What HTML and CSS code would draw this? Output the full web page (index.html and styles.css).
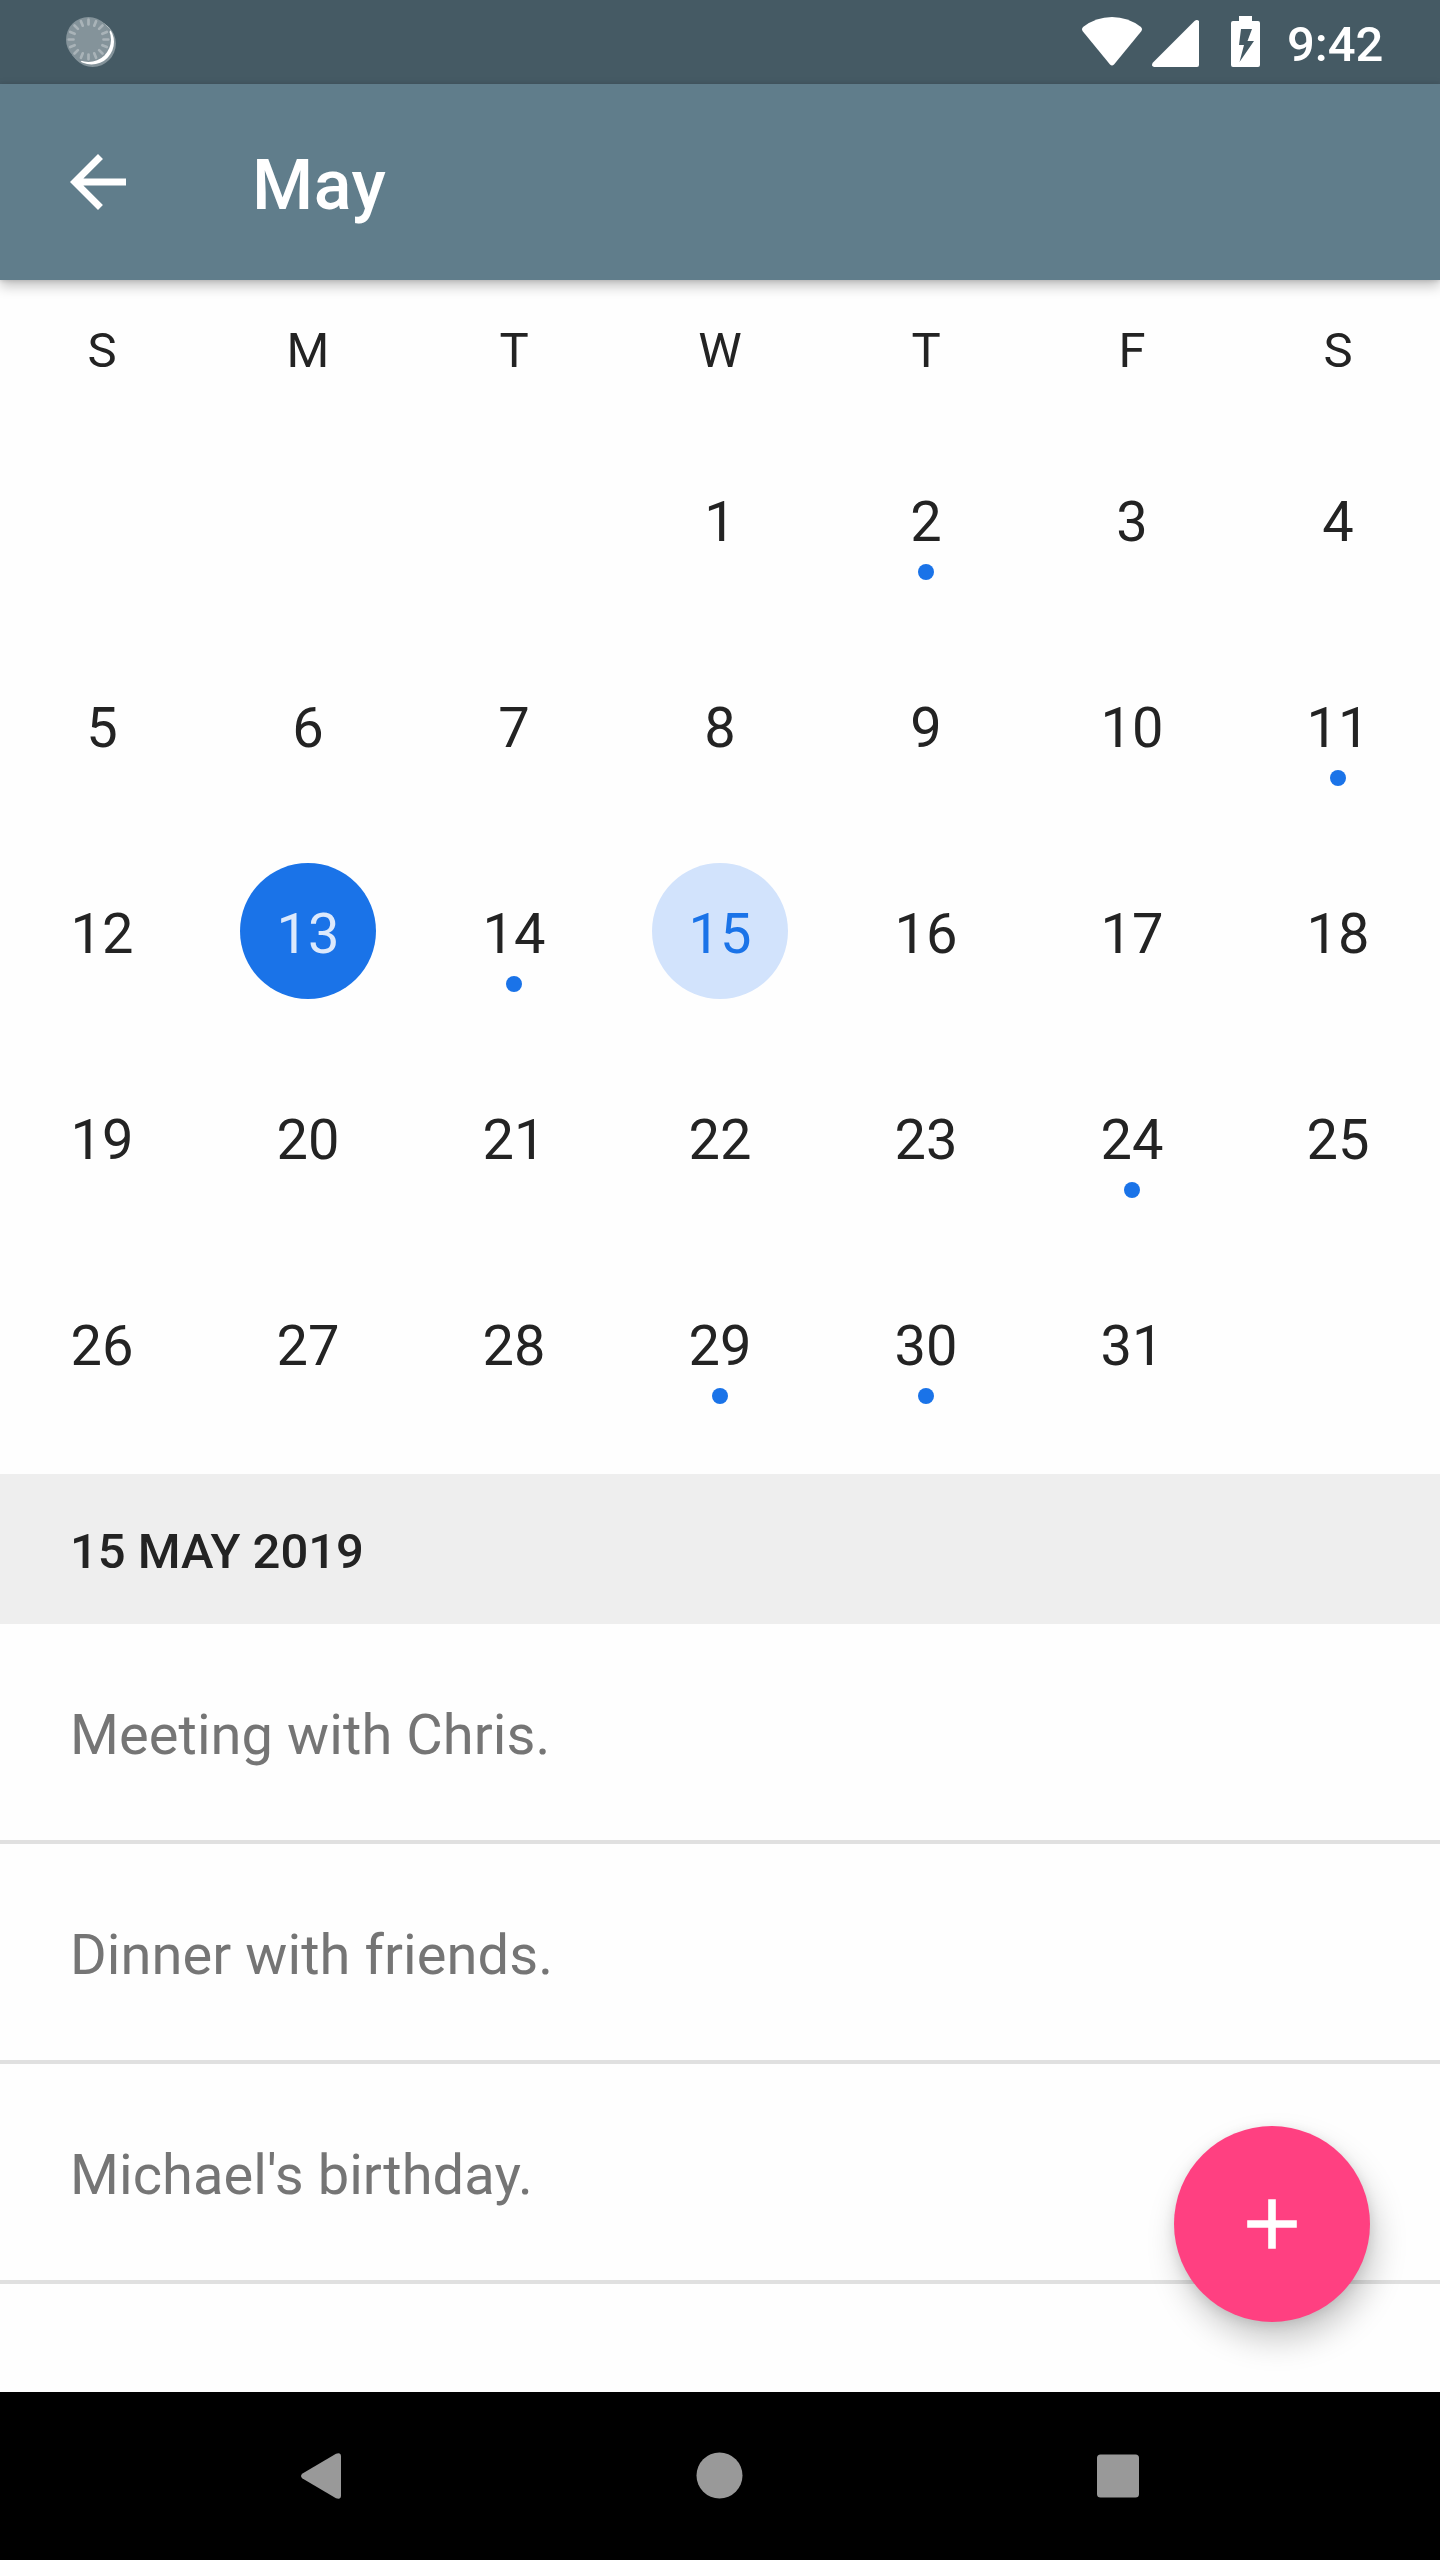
FILE: index.html
```html
<!DOCTYPE html>
<html lang="en">
<head>
<meta charset="utf-8">
<title>May</title>
<link rel="stylesheet" href="styles.css">
</head>
<body>
<div class="screen">
  <header class="status-bar">
    <svg class="sync-icon" width="52" height="52" viewBox="64 15 52 52">
      <circle cx="92.7" cy="43.7" r="23.2" fill="#84939a"/>
      <circle cx="91.5" cy="42" r="22.5" fill="#fff"/>
      <path d="M72 55L80 62.500L111 30L104 23Z" fill="#84939a"/>
      <circle cx="88.500" cy="39.500" r="22.500" fill="#84939a"/>
      <g stroke="#a9b3b8" stroke-width="2.700" stroke-linecap="round">
        <path id="tick" d="M88.500 19.700V24.500M88.500 54.500V59.300"/>
        <use href="#tick" transform="rotate(22.500 88.500 39.500)"/>
        <use href="#tick" transform="rotate(45 88.500 39.500)"/>
        <use href="#tick" transform="rotate(67.500 88.500 39.500)"/>
        <use href="#tick" transform="rotate(90 88.500 39.500)"/>
        <use href="#tick" transform="rotate(112.500 88.500 39.500)"/>
        <use href="#tick" transform="rotate(135 88.500 39.500)"/>
        <use href="#tick" transform="rotate(157.500 88.500 39.500)"/>
      </g>
    </svg>
    <svg class="system-icons" width="180" height="54" viewBox="1081 15 180 54">
      <path fill="#fff" d="M1083 27Q1096 17 1112 17T1141 27Q1143 29 1141.500 31L1114 64.500Q1112 66.500 1110 64.500L1082.500 31Q1081 29 1083 27Z"/>
      <path fill="#fff" d="M1153 62.500L1194.500 21Q1197 18.800 1199 21V65Q1199 67 1197 67H1154Q1150.500 66 1153 62.500Z"/>
      <path fill="#fff" fill-rule="evenodd" d="M1239 16H1252V21H1258Q1260 21 1260 23V65Q1260 67 1258 67H1233Q1231 67 1231 65V23Q1231 21 1233 21H1239ZM1241 29L1239 45H1244L1239.500 62L1254 41H1247.500L1252 29Z"/>
    </svg>
    <span class="clock">9:42</span>
  </header>
  <div class="app-bar">
    <svg class="back" width="84" height="84" viewBox="0 0 24 24"><path fill="#fff" d="M20 11H7.830l5.590-5.590L12 4l-8 8 8 8 1.410-1.410L7.830 13H20v-2z"/></svg>
    <h1 class="title">May</h1>
  </div>
  <main class="content">
    <div class="weekdays"><span>S</span><span>M</span><span>T</span><span>W</span><span>T</span><span>F</span><span>S</span></div>
    <div class="days">
      <span class="day first">1</span><span class="day event">2</span><span class="day">3</span><span class="day">4</span>
      <span class="day">5</span><span class="day">6</span><span class="day">7</span><span class="day">8</span><span class="day">9</span><span class="day">10</span><span class="day event">11</span>
      <span class="day">12</span><span class="day today">13</span><span class="day event">14</span><span class="day selected">15</span><span class="day">16</span><span class="day">17</span><span class="day">18</span>
      <span class="day">19</span><span class="day">20</span><span class="day">21</span><span class="day">22</span><span class="day">23</span><span class="day event">24</span><span class="day">25</span>
      <span class="day">26</span><span class="day">27</span><span class="day">28</span><span class="day event">29</span><span class="day event">30</span><span class="day">31</span>
    </div>
    <h2 class="date">15 MAY 2019</h2>
    <ul class="agenda">
      <li>Meeting with Chris.</li>
      <li>Dinner with friends.</li>
      <li>Michael's birthday.</li>
    </ul>
    <button class="fab" aria-label="Add event"><svg width="84" height="84" viewBox="0 0 84 84"><path fill="#fff" d="M38.200 17.200h7.600v21h21v7.600h-21v21h-7.600v-21h-21v-7.600h21z"/></svg></button>
  </main>
  <nav class="nav-bar">
    <svg width="48" height="48" viewBox="0 0 48 48"><path fill="#999" d="M4.500 21.500L38 1.700Q43 0 43 4.500V43.500Q43 48 38 46.300L4.500 26.500Q1.500 24 4.500 21.500Z"/></svg>
    <svg width="48" height="48" viewBox="0 0 48 48"><circle cx="23.500" cy="23.500" r="23" fill="#999"/></svg>
    <svg width="48" height="48" viewBox="0 0 48 48"><rect x="3" y="2.500" width="42" height="43" rx="3.500" fill="#999"/></svg>
  </nav>
</div>
</body>
</html>
```
FILE: styles.css
```css
* { box-sizing: border-box; }
body { margin: 0; font-family: Roboto, sans-serif; color: #232323; }
.screen { width: 1440px; height: 2560px; display: flex; flex-direction: column; background: #fefefe; overflow: hidden; }
.status-bar { height: 84px; flex: none; display: flex; align-items: flex-start; background: #455a64; color: #fff; }
.sync-icon { margin: 15px 0 0 64px; }
.system-icons { margin: 15px 0 0 auto; }
.clock { width: 179px; padding: 16px 0 0 26px; font-size: 49px; line-height: 57px; font-weight: 500; }
.app-bar { position: relative; z-index: 1; height: 196px; flex: none; display: flex; align-items: center; padding-left: 56px; gap: 112px; background: #607d8b; color: #fff; box-shadow: 0 6px 12px rgba(0,0,0,.24), 0 1px 4px rgba(0,0,0,.12); }
.title { margin: 6px 0 0; font-size: 70px; line-height: 82px; font-weight: 500; letter-spacing: .5px; }
.content { position: relative; flex: 1; }
.weekdays, .days { display: grid; grid-template-columns: repeat(7, 206px); margin: 0 -1px; text-align: center; }
.weekdays { height: 136px; padding-top: 42px; font-size: 49px; line-height: 57px; }
.days { grid-auto-rows: 206px; padding-bottom: 28px; font-size: 56px; }
.day { position: relative; display: flex; justify-content: center; padding-top: 73px; line-height: 66px; }
.first { grid-column: 4; }
.event::after { content: ""; position: absolute; top: 148px; left: calc(50% - 8px); width: 16px; height: 16px; border-radius: 50%; background: #1a73e8; }
.today, .selected { width: 136px; height: 136px; margin-top: 35px; padding-top: 38px; justify-self: center; border-radius: 50%; }
.today { background: #1a73e8; color: #dce9fc; }
.selected { background: #d2e3fc; color: #1a73e8; }
.date { margin: 0; height: 150px; padding: 49px 70px 0; background: #eee; font-size: 49px; line-height: 57px; font-weight: 500; letter-spacing: -.06px; }
.agenda { margin: 0; padding: 0; list-style: none; font-size: 56px; line-height: 66px; letter-spacing: .08px; color: #757575; }
.agenda li { height: 220px; padding: 78px 70px 0; border-bottom: 4px solid #e0e0e0; }
.fab { position: absolute; right: 70px; bottom: 70px; width: 196px; height: 196px; display: flex; align-items: center; justify-content: center; padding: 0; border: 0; border-radius: 50%; background: #ff4081; box-shadow: 5px 18px 32px rgba(0,0,0,.21), 0 3px 12px rgba(0,0,0,.1); }
.nav-bar { height: 168px; flex: none; display: flex; align-items: center; justify-content: space-between; padding: 0 298px; background: #000; }
```
